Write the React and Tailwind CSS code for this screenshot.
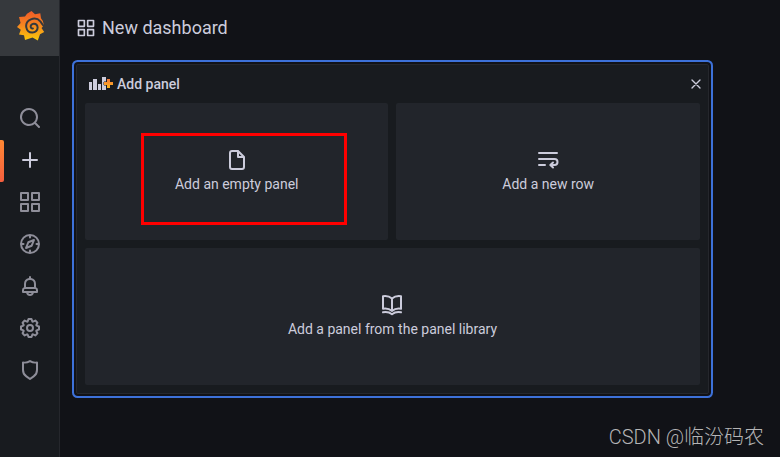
const paths = {
  search:
    'M21.71,20.29,18,16.61A9,9,0,1,0,16.61,18l3.68,3.68a1,1,0,0,0,1.42,0A1,1,0,0,0,21.71,20.29ZM11,18a7,7,0,1,1,7-7A7,7,0,0,1,11,18Z',
  plus: 'M19,11H13V5a1,1,0,0,0-2,0v6H5a1,1,0,0,0,0,2h6v6a1,1,0,0,0,2,0V13h6a1,1,0,0,0,0-2Z',
  apps: 'M10,13H3a1,1,0,0,0-1,1v7a1,1,0,0,0,1,1h7a1,1,0,0,0,1-1V14A1,1,0,0,0,10,13ZM9,20H4V15H9ZM21,2H14a1,1,0,0,0-1,1v7a1,1,0,0,0,1,1h7a1,1,0,0,0,1-1V3A1,1,0,0,0,21,2ZM20,9H15V4h5Zm1,4H14a1,1,0,0,0-1,1v7a1,1,0,0,0,1,1h7a1,1,0,0,0,1-1V14A1,1,0,0,0,21,13Zm-1,7H15V15h5ZM10,2H3A1,1,0,0,0,2,3v7a1,1,0,0,0,1,1h7a1,1,0,0,0,1-1V3A1,1,0,0,0,10,2ZM9,9H4V4H9Z',
  bell: 'M18,13.18V10a6,6,0,0,0-5-5.91V3a1,1,0,0,0-2,0V4.09A6,6,0,0,0,6,10v3.18A3,3,0,0,0,4,16v2a1,1,0,0,0,1,1H8.14a4,4,0,0,0,7.72,0H19a1,1,0,0,0,1-1V16A3,3,0,0,0,18,13.18ZM8,10a4,4,0,0,1,8,0v3H8Zm4,10a2,2,0,0,1-1.72-1h3.44A2,2,0,0,1,12,20Zm6-3H6V16a1,1,0,0,1,1-1H17a1,1,0,0,1,1,1Z',
  cog: 'M21.32,9.55l-1.89-.63.89-1.78A1,1,0,0,0,20.13,6L18,3.87a1,1,0,0,0-1.15-.19l-1.78.89-.63-1.89A1,1,0,0,0,13.5,2h-3a1,1,0,0,0-.95.68L8.92,4.57,7.14,3.68A1,1,0,0,0,6,3.87L3.87,6a1,1,0,0,0-.19,1.15l.89,1.78-1.89.63A1,1,0,0,0,2,10.5v3a1,1,0,0,0,.68.95l1.89.63-.89,1.78A1,1,0,0,0,3.87,18L6,20.13a1,1,0,0,0,1.15.19l1.78-.89.63,1.89a1,1,0,0,0,.95.68h3a1,1,0,0,0,.95-.68l.63-1.89,1.78.89A1,1,0,0,0,18,20.13L20.13,18a1,1,0,0,0,.19-1.15l-.89-1.78,1.89-.63A1,1,0,0,0,22,13.5v-3A1,1,0,0,0,21.32,9.55ZM20,12.78l-1.2.4A2,2,0,0,0,17.64,16l.57,1.14-1.1,1.1L16,17.64a2,2,0,0,0-2.79,1.16l-.4,1.2H11.22l-.4-1.2A2,2,0,0,0,8,17.64l-1.14.57-1.1-1.1L6.36,16A2,2,0,0,0,5.2,13.18L4,12.78V11.22l1.2-.4A2,2,0,0,0,6.36,8L5.79,6.89l1.1-1.1L8,6.36A2,2,0,0,0,10.82,5.2l.4-1.2h1.56l.4,1.2A2,2,0,0,0,16,6.36l1.14-.57,1.1,1.1L17.64,8a2,2,0,0,0,1.16,2.79l1.2.4ZM12,8a4,4,0,1,0,4,4A4,4,0,0,0,12,8Zm0,6a2,2,0,1,1,2-2A2,2,0,0,1,12,14Z',
  shield:
    'M19.63,3.65a1,1,0,0,0-.84-.2,8,8,0,0,1-6.22-1.27,1,1,0,0,0-1.14,0A8,8,0,0,1,5.21,3.45a1,1,0,0,0-.84.2A1,1,0,0,0,4,4.43v7.45a9,9,0,0,0,3.77,7.33l3.65,2.6a1,1,0,0,0,1.16,0l3.65-2.6A9,9,0,0,0,20,11.88V4.43A1,1,0,0,0,19.63,3.65ZM18,11.88a7,7,0,0,1-2.93,5.7L12,19.77,8.93,17.58A7,7,0,0,1,6,11.88V5.58a10,10,0,0,0,6-1.39,10,10,0,0,0,6,1.39Z',
  file: 'M20,8.94a1.31,1.31,0,0,0-.06-.27l0-.09a1.07,1.07,0,0,0-.19-.28h0l-6-6h0a1.07,1.07,0,0,0-.28-.19.32.32,0,0,0-.09,0A.88.88,0,0,0,13.05,2H7A3,3,0,0,0,4,5V19a3,3,0,0,0,3,3H17a3,3,0,0,0,3-3V9S20,9,20,8.94ZM14,5.41,16.59,8H14ZM18,19a1,1,0,0,1-1,1H7a1,1,0,0,1-1-1V5A1,1,0,0,1,7,4h5V9a1,1,0,0,0,1,1h5Z',
};

const strokes = {
  compass:
    'M12 3a9 9 0 1 0 0 18a9 9 0 1 0 0-18ZM12 3v2.500M12 18.500v2.500M3 12h2.500M18.500 12H21M16 8l-2.300 5.700L8 16l2.300-5.700Z',
  wrap: 'M3 5h18M3 11h15.500a2.800 2.800 0 0 1 0 6H15M3 17h6M17 14.500 14.300 17l2.700 2.500',
  book: 'M12 5.500C9.500 3.300 6 2.700 3 3.200v12.600c3-.5 6.500.1 9 2.200 2.500-2.100 6-2.700 9-2.200V3.200c-3-.5-6.500.1-9 2.300ZM12 5.500V18M3 19.300c3-.5 6.500-.100 9 1.900 2.500-2 6-2.400 9-1.900',
  close: 'M6 6l12 12M18 6L6 18',
};

function Icon({ name, className }) {
  return (
    <svg viewBox="0 0 24 24" className={className} aria-hidden="true">
      {paths[name] ? (
        <path d={paths[name]} fill="currentColor" />
      ) : (
        <path
          d={strokes[name]}
          fill="none"
          stroke="currentColor"
          strokeWidth="2"
          strokeLinecap="round"
          strokeLinejoin="round"
        />
      )}
    </svg>
  );
}

const nav = [
  { icon: 'search', label: 'Search dashboards' },
  { icon: 'plus', label: 'Create', active: true },
  { icon: 'apps', label: 'Dashboards' },
  { icon: 'compass', label: 'Explore' },
  { icon: 'bell', label: 'Alerting' },
  { icon: 'cog', label: 'Configuration' },
  { icon: 'shield', label: 'Server Admin' },
];

function Logo() {
  return (
    <svg viewBox="0 0 28 30" className="h-[30px] w-7" aria-hidden="true">
      <linearGradient id="flame" x1="0" y1="0" x2="0" y2="1">
        <stop offset="0" stopColor="#f05a28" />
        <stop offset="0.45" stopColor="#f58220" />
        <stop offset="1" stopColor="#fbca0a" />
      </linearGradient>
      <path
        d="M14.500 0 18 3.200 23.300 2.200 24 7.200Q26.800 10 27 14.500L24.500 17 27.200 21 23 23.200 20.800 29.500 15.500 26.600 8 29 7 24.300 2 23.600 3.800 18.800 0 16 3.600 12 2 6 8 5.600 10 2.800Z"
        fill="url(#flame)"
      />
      <path
        d="M28 15.500C25.500 15 25.300 12.500 23.300 10.300C21 7.800 17.200 7 13.900 8.400C10.500 9.900 8.700 13.200 9.300 16.400C9.900 19.500 12.400 21.700 15.400 21.600C18.500 21.500 20.800 19.200 20.600 16.400C20.400 14.200 18.700 12.700 16.700 12.800C14.600 12.900 13.400 14.600 13.800 16.200C14.100 17.300 15 17.700 15.900 17.500"
        fill="none"
        stroke="#36393d"
        strokeWidth="2"
        strokeLinecap="round"
      />
    </svg>
  );
}

function Sidebar() {
  return (
    <nav className="w-15 shrink-0 border-r border-[#25272c] bg-[#181b1f]">
      <a href="#home" aria-label="Home" className="flex h-14 items-center justify-center bg-[#36393d] pb-1 pl-0.5">
        <Logo />
      </a>
      <ul className="mt-[42px]">
        {nav.map((item) => (
          <li key={item.icon} className="relative">
            {item.active && (
              <span className="absolute inset-y-0 left-0 w-1 rounded-r-xs bg-linear-to-b from-[#ff8833] to-[#f55f3e]" />
            )}
            <a
              href={'#' + item.icon}
              aria-label={item.label}
              className={
                'flex h-[42px] items-center justify-center pb-0.5 ' +
                (item.active ? 'text-[#ccccdc]' : 'text-[#8e8e99]')
              }
            >
              <Icon name={item.icon} className="size-6" />
            </a>
          </li>
        ))}
      </ul>
    </nav>
  );
}

function AddPanelIcon() {
  return (
    <svg viewBox="0 0 24 14" className="h-3.5 w-6" aria-hidden="true">
      <linearGradient id="spark" x1="0" y1="0" x2="0" y2="1">
        <stop offset="0" stopColor="#f3763a" />
        <stop offset="1" stopColor="#fbb81c" />
      </linearGradient>
      <path d="M0 5h3v8H0ZM4 2h4v11H4ZM9 7h3v6H9ZM13 0h4v13h-4Z" fill="#ccccdc" />
      <path
        d="M18 2h3v3h3v3h-3v3h-3V8h-3V5h3Z"
        fill="url(#spark)"
        stroke="#181b1f"
        strokeWidth="1"
        paintOrder="stroke"
      />
    </svg>
  );
}

function Tile({ icon, label, className = '', marked = false }) {
  return (
    <button
      className={
        'relative flex h-[137px] flex-col items-center justify-center rounded-xs bg-[#22252b] text-[14px] leading-6 text-[#ccccdc] ' +
        className
      }
    >
      <Icon name={icon} className="size-6" />
      <span>{label}</span>
      {marked && (
        <span className="absolute top-[30px] right-[41px] bottom-[15px] left-14 border-3 border-[#ff0000]" />
      )}
    </button>
  );
}

export default function App() {
  return (
    <div className="relative flex min-h-screen bg-[#111217] font-[Roboto,sans-serif] text-[#ccccdc]">
      <Sidebar />
      <main className="min-w-0 flex-1 px-4">
        <header className="flex h-14 items-center gap-1.5">
          <Icon name="apps" className="size-5" />
          <h1 className="text-[18px] leading-6">New dashboard</h1>
        </header>
        <section className="mt-2 w-[92%] rounded-xs border border-[#25272c] bg-[#181b1f] px-2 pb-2 ring-2 ring-[#3d71d9] ring-offset-2 ring-offset-[#111217]">
          <div className="-mr-1 flex h-[38px] items-center gap-1 pl-1">
            <AddPanelIcon />
            <h2 className="flex-1 text-[14px] leading-[22px] font-medium">Add panel</h2>
            <button aria-label="Close" className="flex size-4 items-center justify-center">
              <Icon name="close" className="size-4" />
            </button>
          </div>
          <div className="grid grid-cols-2 gap-2">
            <Tile icon="file" label="Add an empty panel" marked />
            <Tile icon="wrap" label="Add a new row" />
            <Tile icon="book" label="Add a panel from the panel library" className="col-span-2" />
          </div>
        </section>
      </main>
      <p className="absolute right-4 bottom-1.5 font-[Roboto,'Noto_Sans_CJK_SC',sans-serif] text-[20px] leading-7 font-light text-[#b5b5b6]">
        CSDN @临汾码农
      </p>
    </div>
  );
}
